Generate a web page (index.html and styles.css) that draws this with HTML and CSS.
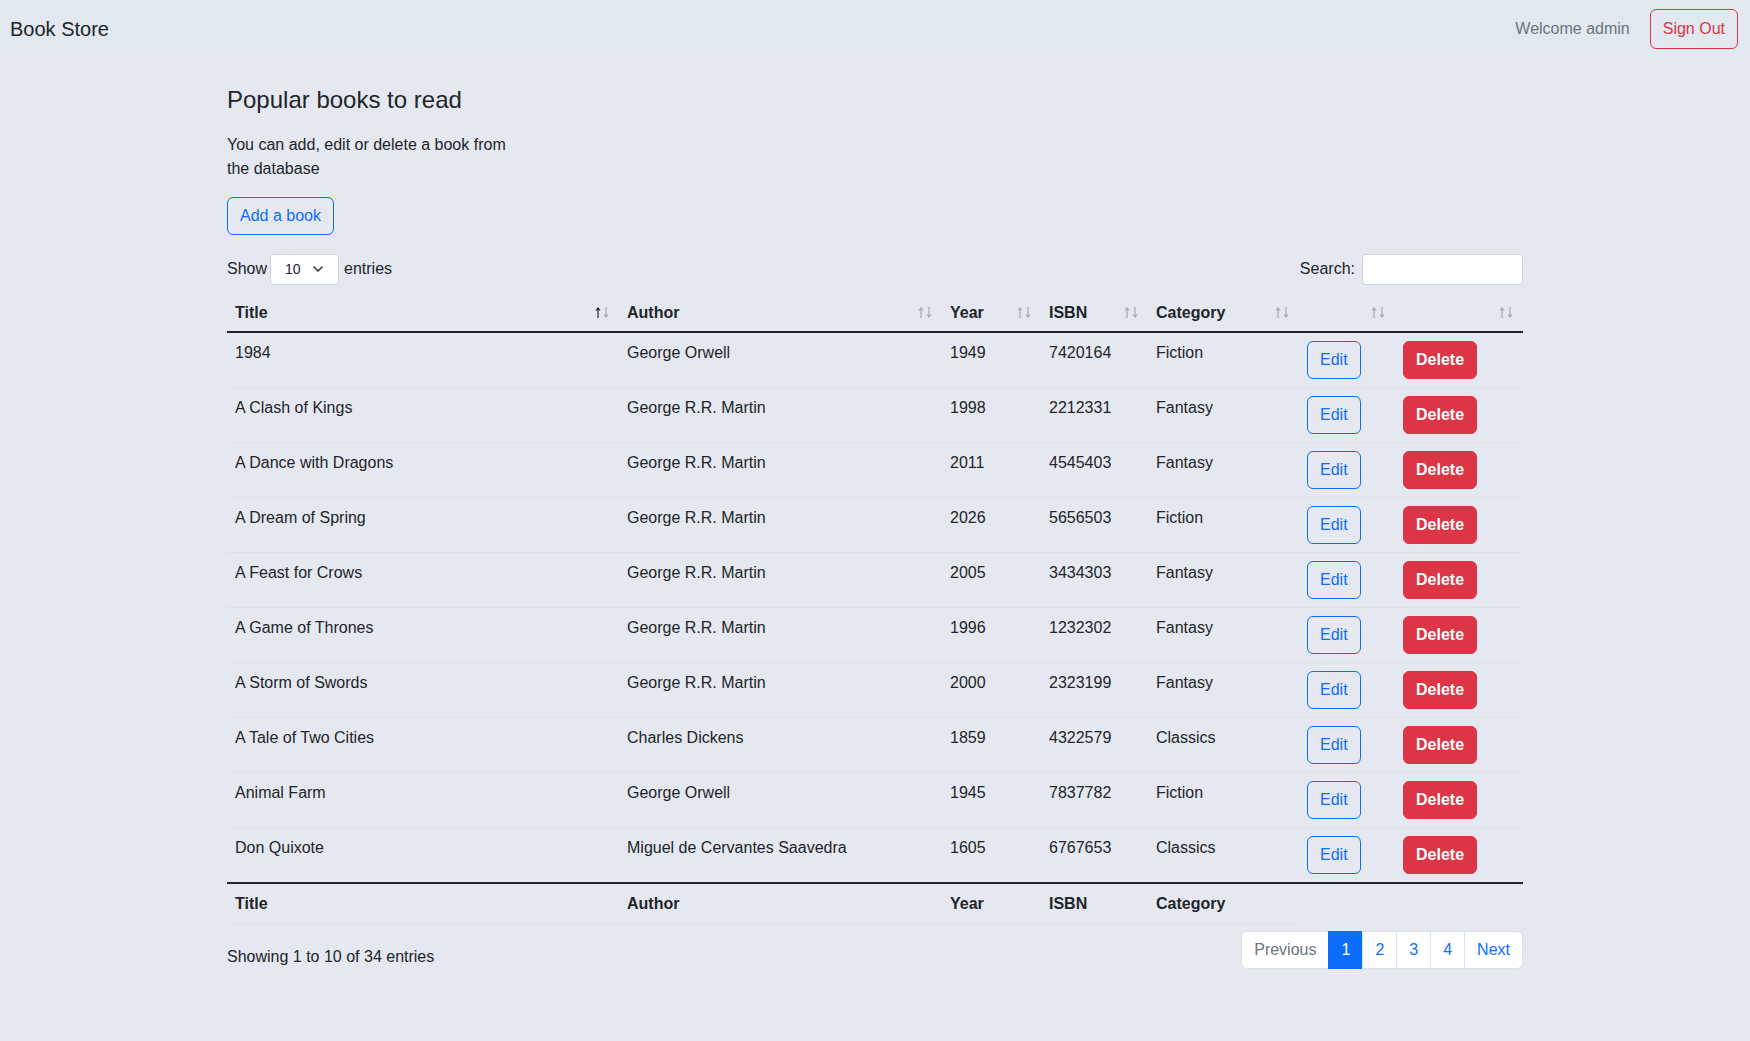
FILE: index.html
```html
<!DOCTYPE html>
<html lang="en">
<head>
<meta charset="utf-8">
<title>Book Store</title>
<link rel="stylesheet" href="styles.css">
</head>
<body>
<nav class="navbar">
  <span class="brand">Book Store</span>
  <div class="nav-right">
    <span class="welcome">Welcome admin</span>
    <button class="btn btn-outline-danger">Sign Out</button>
  </div>
</nav>
<main class="container">
  <h3 class="page-title">Popular books to read</h3>
  <p class="intro">You can add, edit or delete a book from the database</p>
  <button class="btn btn-outline-primary">Add a book</button>

  <div class="dt-top">
    <div class="dt-length">Show
      <div class="fake-select"><span>10</span>
        <svg class="chev" width="10" height="6" viewBox="0 0 10 6"><path d="M1 1L5 5L9 1" fill="none" stroke="#343a40" stroke-width="1.6" stroke-linecap="round" stroke-linejoin="round"/></svg>
      </div>
      entries</div>
    <div class="dt-search">Search: <input class="search-input" type="text"></div>
  </div>

  <table class="books">
    <colgroup>
      <col class="c-title"><col class="c-author"><col class="c-year"><col class="c-isbn"><col class="c-cat"><col class="c-edit"><col class="c-del">
    </colgroup>
    <thead>
      <tr>
        <th><div class="th-in"><span>Title</span><svg class="sort active" width="14" height="11" viewBox="0 0 14 11"><path class="up" d="M3 11V1M1 3.5L3 1L5 3.5"/><path class="dn" d="M11 0V10M9 7.5L11 10L13 7.5"/></svg></div></th>
        <th><div class="th-in"><span>Author</span><svg class="sort" width="14" height="11" viewBox="0 0 14 11"><path class="up" d="M3 11V1M1 3.5L3 1L5 3.5"/><path class="dn" d="M11 0V10M9 7.5L11 10L13 7.5"/></svg></div></th>
        <th><div class="th-in"><span>Year</span><svg class="sort" width="14" height="11" viewBox="0 0 14 11"><path class="up" d="M3 11V1M1 3.5L3 1L5 3.5"/><path class="dn" d="M11 0V10M9 7.5L11 10L13 7.5"/></svg></div></th>
        <th><div class="th-in"><span>ISBN</span><svg class="sort" width="14" height="11" viewBox="0 0 14 11"><path class="up" d="M3 11V1M1 3.5L3 1L5 3.5"/><path class="dn" d="M11 0V10M9 7.5L11 10L13 7.5"/></svg></div></th>
        <th><div class="th-in"><span>Category</span><svg class="sort" width="14" height="11" viewBox="0 0 14 11"><path class="up" d="M3 11V1M1 3.5L3 1L5 3.5"/><path class="dn" d="M11 0V10M9 7.5L11 10L13 7.5"/></svg></div></th>
        <th><div class="th-in"><span></span><svg class="sort" width="14" height="11" viewBox="0 0 14 11"><path class="up" d="M3 11V1M1 3.5L3 1L5 3.5"/><path class="dn" d="M11 0V10M9 7.5L11 10L13 7.5"/></svg></div></th>
        <th><div class="th-in"><span></span><svg class="sort" width="14" height="11" viewBox="0 0 14 11"><path class="up" d="M3 11V1M1 3.5L3 1L5 3.5"/><path class="dn" d="M11 0V10M9 7.5L11 10L13 7.5"/></svg></div></th>
      </tr>
    </thead>
    <tbody>
      <tr><td>1984</td><td>George Orwell</td><td>1949</td><td>7420164</td><td>Fiction</td><td><button class="btn btn-outline-primary">Edit</button></td><td><button class="btn btn-danger">Delete</button></td></tr>
      <tr><td>A Clash of Kings</td><td>George R.R. Martin</td><td>1998</td><td>2212331</td><td>Fantasy</td><td><button class="btn btn-outline-primary">Edit</button></td><td><button class="btn btn-danger">Delete</button></td></tr>
      <tr><td>A Dance with Dragons</td><td>George R.R. Martin</td><td>2011</td><td>4545403</td><td>Fantasy</td><td><button class="btn btn-outline-primary">Edit</button></td><td><button class="btn btn-danger">Delete</button></td></tr>
      <tr><td>A Dream of Spring</td><td>George R.R. Martin</td><td>2026</td><td>5656503</td><td>Fiction</td><td><button class="btn btn-outline-primary">Edit</button></td><td><button class="btn btn-danger">Delete</button></td></tr>
      <tr><td>A Feast for Crows</td><td>George R.R. Martin</td><td>2005</td><td>3434303</td><td>Fantasy</td><td><button class="btn btn-outline-primary">Edit</button></td><td><button class="btn btn-danger">Delete</button></td></tr>
      <tr><td>A Game of Thrones</td><td>George R.R. Martin</td><td>1996</td><td>1232302</td><td>Fantasy</td><td><button class="btn btn-outline-primary">Edit</button></td><td><button class="btn btn-danger">Delete</button></td></tr>
      <tr><td>A Storm of Swords</td><td>George R.R. Martin</td><td>2000</td><td>2323199</td><td>Fantasy</td><td><button class="btn btn-outline-primary">Edit</button></td><td><button class="btn btn-danger">Delete</button></td></tr>
      <tr><td>A Tale of Two Cities</td><td>Charles Dickens</td><td>1859</td><td>4322579</td><td>Classics</td><td><button class="btn btn-outline-primary">Edit</button></td><td><button class="btn btn-danger">Delete</button></td></tr>
      <tr><td>Animal Farm</td><td>George Orwell</td><td>1945</td><td>7837782</td><td>Fiction</td><td><button class="btn btn-outline-primary">Edit</button></td><td><button class="btn btn-danger">Delete</button></td></tr>
      <tr><td>Don Quixote</td><td>Miguel de Cervantes Saavedra</td><td>1605</td><td>6767653</td><td>Classics</td><td><button class="btn btn-outline-primary">Edit</button></td><td><button class="btn btn-danger">Delete</button></td></tr>
    </tbody>
    <tfoot>
      <tr><th>Title</th><th>Author</th><th>Year</th><th>ISBN</th><th>Category</th></tr>
    </tfoot>
  </table>

  <div class="dt-bottom">
    <div class="dt-info">Showing 1 to 10 of 34 entries</div>
    <ul class="pagination">
      <li class="page disabled"><span class="page-link">Previous</span></li>
      <li class="page active"><span class="page-link">1</span></li>
      <li class="page"><span class="page-link">2</span></li>
      <li class="page"><span class="page-link">3</span></li>
      <li class="page"><span class="page-link">4</span></li>
      <li class="page"><span class="page-link">Next</span></li>
    </ul>
  </div>
</main>
</body>
</html>
```

FILE: styles.css
```css
* { box-sizing: border-box; }

body {
  margin: 0;
  background: #e5e8f0;
  color: #212529;
  font-family: "Liberation Sans", Arial, sans-serif;
  font-size: 16px;
  line-height: 1.5;
  min-height: 1041px;
}

.navbar {
  display: flex;
  justify-content: space-between;
  align-items: center;
  padding: 9px 12px 9px 10px;
  background: #e2e8f0;
  height: 58px;
}

.brand {
  font-size: 20px;
  line-height: 30px;
  color: #212529;
}

.nav-right {
  display: flex;
  align-items: center;
}

.welcome {
  color: #6c757d;
  margin-right: 20px;
}

.btn {
  font-family: inherit;
  font-size: 16px;
  line-height: 24px;
  padding: 6px 12px;
  border: 1px solid transparent;
  border-radius: 6px;
  background: transparent;
  cursor: pointer;
}

.btn-outline-danger {
  color: #dc3545;
  border-color: #dc3545;
  padding: 7px 12px;
}

.btn-outline-primary {
  color: #0d6efd;
  border-color: #0d6efd;
}

.btn-danger {
  color: #fff;
  background: #dc3545;
  border-color: #dc3545;
  font-weight: 700;
}

.container {
  width: 1296px;
  margin: 0 auto;
  padding-top: 28px;
}

.page-title {
  font-size: 24px;
  font-weight: 400;
  line-height: 1.2;
  margin: 0 0 18px;
}

.intro {
  width: 295px;
  margin: 0 0 16px;
}

.dt-top {
  display: flex;
  justify-content: space-between;
  align-items: center;
  margin-top: 19px;
  height: 31px;
}

.dt-length {
  display: flex;
  align-items: center;
}

.fake-select {
  display: flex;
  align-items: center;
  justify-content: space-between;
  width: 69px;
  height: 31px;
  margin: 0 5px 0 3px;
  padding: 0 15px 0 14px;
  background: #fff;
  border: 1px solid #ced4da;
  border-radius: 4px;
  font-size: 14px;
}

.dt-search {
  display: flex;
  align-items: center;
}

.search-input {
  width: 161px;
  height: 31px;
  margin-left: 7px;
  background: #fff;
  border: 1px solid #ced4da;
  border-radius: 4px;
}

.books {
  width: 100%;
  table-layout: fixed;
  border-collapse: collapse;
  margin-top: 6px;
}

.c-title { width: 392px; }
.c-author { width: 323px; }
.c-year { width: 99px; }
.c-isbn { width: 107px; }
.c-cat { width: 151px; }
.c-edit { width: 96px; }
.c-del { width: 128px; }

.books th {
  text-align: left;
  font-weight: 700;
  padding: 8px 10px 8px 8px;
}

.books thead th {
  padding-top: 10px;
  padding-bottom: 6px;
  border-bottom: 2px solid #212529;
}

.th-in {
  display: flex;
  justify-content: space-between;
  align-items: center;
}

.sort path {
  fill: none;
  stroke: #a3a8b0;
  stroke-width: 1.2;
}

.sort.active .up {
  stroke: #212529;
}

.books td {
  padding: 8px;
  vertical-align: top;
  border-bottom: 1px solid #dee2e6;
}

.books tbody tr:last-child td {
  border-bottom: 2px solid #212529;
}

.books tfoot th {
  border-bottom: 1px solid #dee2e6;
}

.dt-bottom {
  display: flex;
  justify-content: space-between;
  align-items: flex-start;
  margin-top: 6px;
}

.dt-info {
  padding-top: 14px;
}

.pagination {
  display: flex;
  list-style: none;
  margin: 0;
  padding: 0;
}

.page-link {
  display: block;
  padding: 6px 12px;
  line-height: 24px;
  background: #fff;
  border: 1px solid #dee2e6;
  margin-left: -1px;
  color: #0d6efd;
}

.page:first-child .page-link {
  margin-left: 0;
  border-radius: 6px 0 0 6px;
}

.page:last-child .page-link {
  border-radius: 0 6px 6px 0;
}

.page.active .page-link {
  background: #0d6efd;
  border-color: #0d6efd;
  color: #fff;
}

.page.disabled .page-link {
  color: #6c757d;
}
```
